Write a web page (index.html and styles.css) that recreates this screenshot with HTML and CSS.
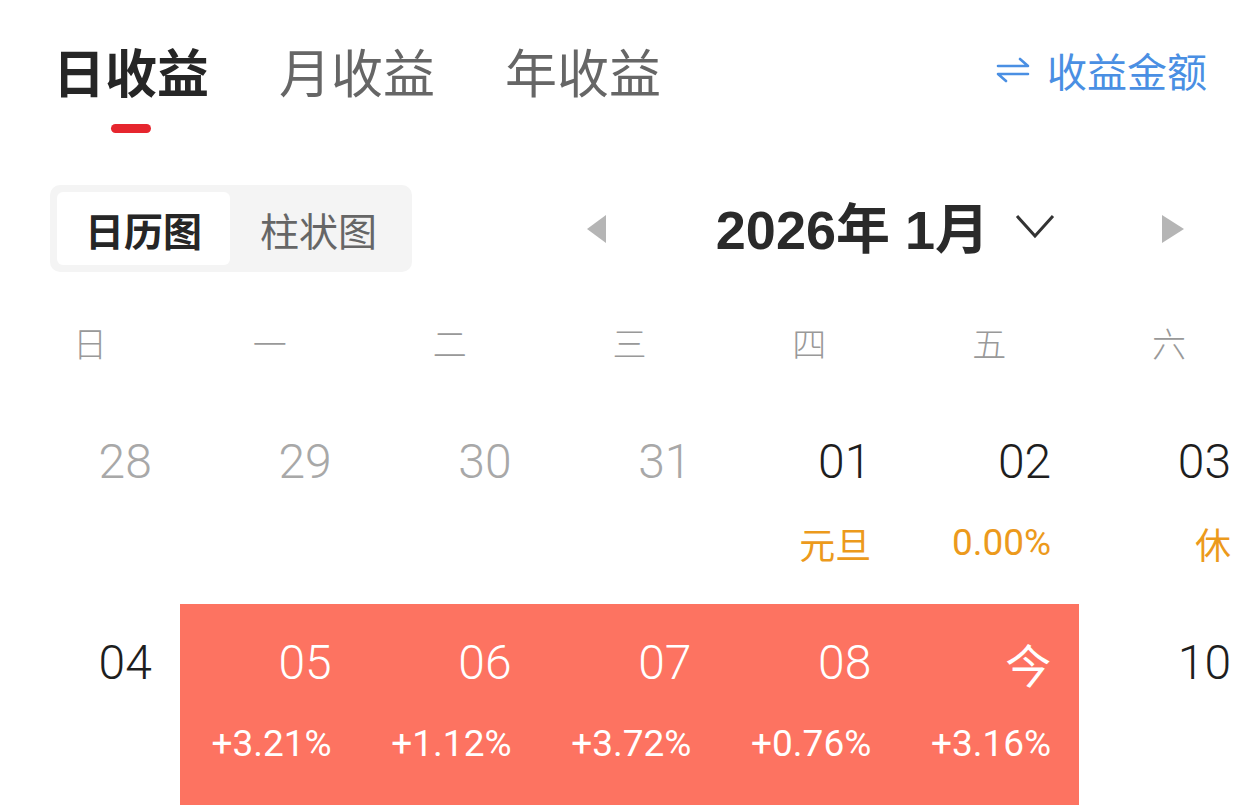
FILE: index.html
```html
<!DOCTYPE html>
<html lang="zh-CN">
<head>
<meta charset="utf-8">
<title>日收益</title>
<link rel="stylesheet" href="styles.css">
</head>
<body>
<div class="page">
  <header class="top">
    <nav class="tabs">
      <div class="tab active">日收益<span class="underline"></span></div>
      <div class="tab">月收益</div>
      <div class="tab">年收益</div>
    </nav>
    <a class="switch">
      <svg class="switch-icon" width="34" height="26" viewBox="0 0 34 26">
        <path d="M2 9 H32 L24 2" fill="none" stroke="#4a8fe3" stroke-width="2.6" stroke-linecap="round" stroke-linejoin="round"/>
        <path d="M32 17 H2 L10 24" fill="none" stroke="#4a8fe3" stroke-width="2.6" stroke-linecap="round" stroke-linejoin="round"/>
      </svg>
      <span>收益金额</span>
    </a>
  </header>

  <section class="controls">
    <div class="segment">
      <div class="seg-item active">日历图</div>
      <div class="seg-item">柱状图</div>
    </div>
    <div class="month-nav">
      <svg class="arrow" width="19" height="28" viewBox="0 0 19 28"><polygon points="19,0 19,28 0,14" fill="#b5b5b5"/></svg>
      <div class="month-title">2026年 1月</div>
      <svg class="chevron" width="40" height="26" viewBox="0 0 40 26"><polyline points="2,3 20,23 38,3" fill="none" stroke="#333" stroke-width="3"/></svg>
      <svg class="arrow right" width="22" height="28" viewBox="0 0 22 28"><polygon points="0,0 22,14 0,28" fill="#b5b5b5"/></svg>
    </div>
  </section>

  <div class="weekdays">
    <div>日</div><div>一</div><div>二</div><div>三</div><div>四</div><div>五</div><div>六</div>
  </div>

  <div class="grid">
    <div class="cell"><div class="num muted">28</div></div>
    <div class="cell"><div class="num muted">29</div></div>
    <div class="cell"><div class="num muted">30</div></div>
    <div class="cell"><div class="num muted">31</div></div>
    <div class="cell"><div class="num">01</div><div class="sub orange cjk">元旦</div></div>
    <div class="cell"><div class="num">02</div><div class="sub orange">0.00%</div></div>
    <div class="cell"><div class="num">03</div><div class="sub orange cjk">休</div></div>

    <div class="cell"><div class="num">04</div></div>
    <div class="cell up"><div class="num">05</div><div class="sub">+3.21%</div></div>
    <div class="cell up"><div class="num">06</div><div class="sub">+1.12%</div></div>
    <div class="cell up"><div class="num">07</div><div class="sub">+3.72%</div></div>
    <div class="cell up"><div class="num">08</div><div class="sub">+0.76%</div></div>
    <div class="cell up"><div class="num cjk today">今</div><div class="sub">+3.16%</div></div>
    <div class="cell"><div class="num">10</div></div>
  </div>
</div>
</body>
</html>
```
FILE: styles.css
```css
* { box-sizing: border-box; }
html, body { margin: 0; padding: 0; background: #fff; }
body {
  font-family: Roboto, "Noto Sans CJK SC", sans-serif;
  color: #222;
  width: 1259px;
  overflow: hidden;
}
.page { width: 1259px; }

.top {
  display: flex;
  justify-content: space-between;
  align-items: flex-start;
  padding: 40px 52px 0 53px;
  height: 133px;
}
.tabs { display: flex; gap: 70px; }
.tab {
  position: relative;
  font-family: "Noto Sans CJK SC", sans-serif;
  font-size: 52px;
  line-height: 62px;
  color: #666;
}
.tab.active { color: #262626; font-weight: 600; }
.underline {
  position: absolute;
  left: 58px;
  top: 84px;
  width: 40px;
  height: 9px;
  border-radius: 5px;
  background: #e6262e;
}
.switch {
  display: flex;
  align-items: center;
  gap: 17px;
  color: #4a8fe3;
  font-family: "Noto Sans CJK SC", sans-serif;
  font-size: 40px;
  line-height: 60px;
}

.controls {
  display: flex;
  align-items: center;
  padding: 52px 0 0 50px;
}
.segment {
  display: flex;
  background: #f4f4f4;
  border-radius: 10px;
  padding: 7px;
  height: 87px;
  width: 362px;
}
.seg-item {
  flex: 1;
  display: flex;
  align-items: center;
  justify-content: center;
  font-family: "Noto Sans CJK SC", sans-serif;
  font-size: 39px;
  color: #666;
  border-radius: 6px;
}
.seg-item.active {
  background: #fff;
  color: #262626;
  font-weight: 600;
  flex: 0 0 173px;
}
.seg-item:last-child { padding-left: 2px; }

.month-nav {
  display: flex;
  align-items: center;
  margin-left: auto;
  margin-right: 75px;
  height: 87px;
}
.month-title {
  margin-left: 110px;
  font-family: "Liberation Sans", "Noto Sans CJK SC", sans-serif;
  font-weight: 700;
  font-size: 54px;
  line-height: 60px;
  color: #2a2a2a;
  margin-top: 3px;
}
.chevron { margin-left: 26px; margin-top: -6px; }
.arrow.right { margin-left: 107px; }

.weekdays {
  display: grid;
  grid-template-columns: repeat(7, 1fr);
  margin-top: 51px;
  height: 80px;
  font-family: "Noto Sans CJK SC", sans-serif;
  font-weight: 300;
  font-size: 34px;
  line-height: 40px;
  color: #999;
  text-align: center;
}

.grid {
  display: grid;
  grid-template-columns: repeat(7, 1fr);
  grid-auto-rows: 201px;
}
.cell {
  padding: 31px 28px 0 0;
  text-align: right;
}
.num {
  font-size: 48px;
  font-weight: 300;
  line-height: 56px;
  color: #1e1e1e;
}
.num.muted { color: #a8a8a8; }
.num.cjk { font-family: "Noto Sans CJK SC", sans-serif; font-size: 46px; font-weight: 400; }
.sub {
  margin-top: 31px;
  font-size: 37px;
  line-height: 44px;
}
.sub.cjk { font-family: "Noto Sans CJK SC", sans-serif; font-size: 36px; }
.orange { color: #ec9a1c; }
.up { background: #fd7361; }
.up .num, .up .sub { color: #fff; }
```
